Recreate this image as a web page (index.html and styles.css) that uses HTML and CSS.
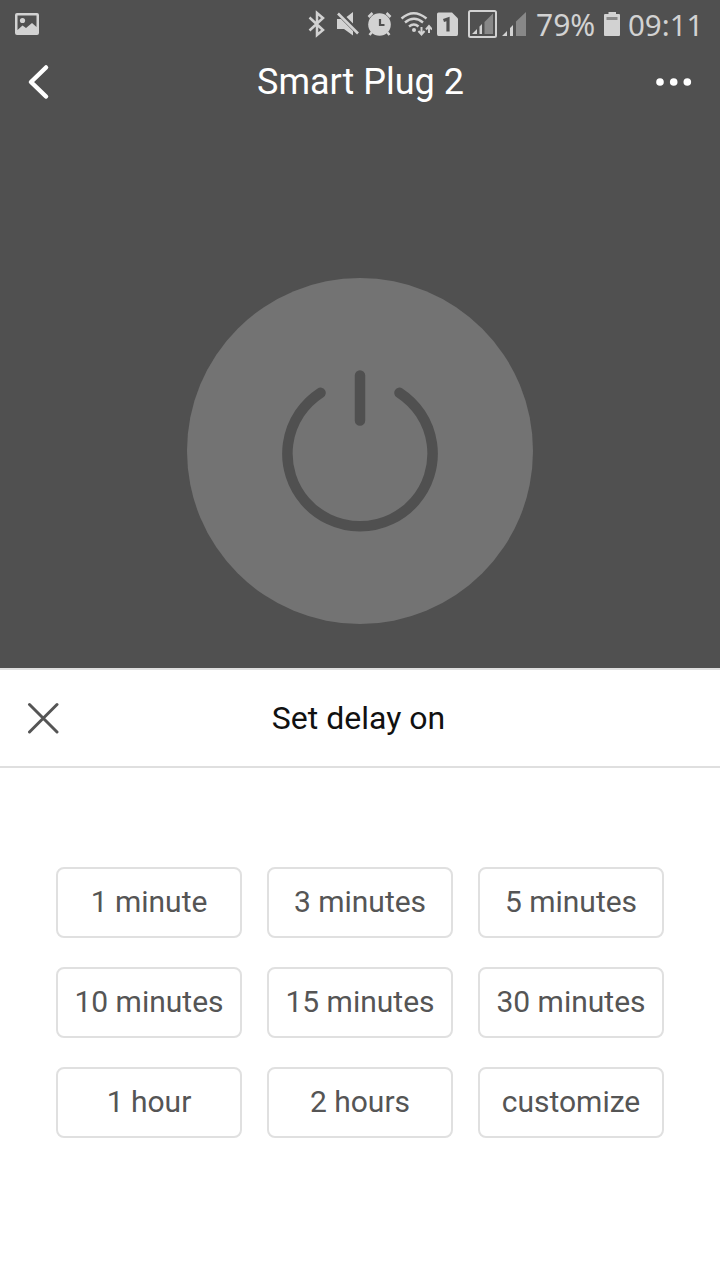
FILE: index.html
```html
<!DOCTYPE html>
<html lang="en">
<head>
<meta charset="utf-8">
<title>Smart Plug 2</title>
<link rel="stylesheet" href="styles.css">
</head>
<body>
<main class="screen">
  <section class="device">
    <div class="status">
      <svg class="picture" width="24" height="22" viewBox="15 13 24 22"><path fill-rule="evenodd" d="M17 13H37Q39 13 39 15V33Q39 35 37 35H17Q15 35 15 33V15Q15 13 17 13ZM17.500 15.500V30L22.500 25.500L26 28L32 23L36.500 27V15.500Z"/><circle cx="22.500" cy="20.500" r="2.600"/></svg>
      <div class="indicators">
        <svg class="bluetooth" width="17" height="50" viewBox="308 0 17 50"><path class="line" d="M309.500 17.500L323 30L317 35V13L323 18L309.500 30.500" stroke-width="2.500"/></svg>
        <svg class="mute" width="24" height="50" viewBox="336 0 24 50"><path d="M337 19H341L353 31V35.500L344 29H337ZM346.500 17L353 12V23.500Z"/><path class="line" d="M338 13.500L358 33.500" stroke-width="2.600"/></svg>
        <svg class="alarm" width="26" height="50" viewBox="367 0 26 50"><circle cx="379.500" cy="24.500" r="11.300"/><path class="line" d="M368.500 17L372.500 13M390.500 17L386.500 13M372 32L369.500 35M387 32L389.500 35" stroke-width="2.500"/><path class="cut" d="M380 19V25H384.500" stroke-width="2.200"/></svg>
        <svg class="wifi" width="32" height="50" viewBox="400 0 32 50"><path class="line" d="M401.500 18.500Q413.500 8 426.500 18.500M405 22.500Q414 15 423 22.500M409 26.500Q414 22.500 418.500 26.500" stroke-width="2.400"/><circle cx="414" cy="30" r="2"/><path class="line" d="M421.500 27V34M418.500 31L421.500 34.500L424.500 31M429 33V26.500M426 29.500L429 26L432 29.500" stroke-width="2"/></svg>
        <svg class="sim" width="21" height="50" viewBox="437 0 21 50"><path d="M438.500 12.500H452L458 18.500V34Q458 36 456.500 36H438.500Q437 36 437 34V14Q437 12.500 438.500 12.500Z"/><path class="cut" d="M443.500 20.500L448 19V31.500" stroke-width="3.200"/></svg>
        <svg class="signal-main" width="29" height="50" viewBox="468 0 29 50"><rect class="line" x="469" y="11" width="27" height="26" rx="1.500" stroke-width="2"/><path d="M472 34L477 29V34ZM479.500 26.500L482 24V34H479.500Z"/><path class="faint" d="M484.500 22L493 13.500V34H484.500Z"/></svg>
        <svg class="signal" width="24" height="50" viewBox="502 0 24 50"><path d="M502 36L507 31V36ZM510 28L513 25V36H510Z"/><path class="faint" d="M516 21.500L526 12V36H516Z"/></svg>
        <span class="percent">79%</span>
        <svg class="battery" width="17" height="50" viewBox="604 0 17 50"><path d="M608.500 14V12H616V14H619Q620 14 620 15V35Q620 36 619 36H605Q604 36 604 35V15Q604 14 605 14Z"/><path class="faint" d="M606.500 17H617.500V20H606.500Z"/></svg>
        <span class="time">09:11</span>
      </div>
    </div>
    <header class="navbar">
      <svg width="24" height="40" viewBox="27 62 24 40"><path class="chevron" d="M46 67.500L31 82L46 96.500"/></svg>
      <h1 class="title">Smart Plug 2</h1>
      <svg class="more" width="36" height="10" viewBox="656 77 36 10"><circle cx="660" cy="82" r="3.800"/><circle cx="673.700" cy="82" r="3.800"/><circle cx="687.300" cy="82" r="3.800"/></svg>
    </header>
    <svg class="power" width="346" height="346" viewBox="187 278 346 346"><circle cx="360" cy="451" r="173"/><path d="M360 375.500V420.500M320.500 392.800A72.600 72.600 0 1 0 399.500 392.800"/></svg>
  </section>
  <section class="sheet">
    <header class="sheet-head">
      <svg class="close" width="32" height="32" viewBox="27 702 32 32"><path d="M29.500 704.500L57 732M57 704.500L29.500 732"/></svg>
      <h2 class="sheet-title">Set delay on</h2>
    </header>
    <div class="options">
      <button class="option">1 minute</button>
      <button class="option">3 minutes</button>
      <button class="option">5 minutes</button>
      <button class="option">10 minutes</button>
      <button class="option">15 minutes</button>
      <button class="option">30 minutes</button>
      <button class="option">1 hour</button>
      <button class="option">2 hours</button>
      <button class="option">customize</button>
    </div>
  </section>
</main>
</body>
</html>
```
FILE: styles.css
```css
* { box-sizing: border-box; }
body { margin: 0; font-family: Roboto, sans-serif; }
svg { display: block; flex: none; }
h1, h2 { margin: 0; font-weight: 400; }
.screen { width: 720px; height: 1280px; background: #fff; overflow: hidden; }
.device { height: 668px; background: #505050; }

.status { display: flex; justify-content: space-between; align-items: center; height: 50px; padding: 0 17px 0 15px; color: #d2d2d2; fill: #d2d2d2; }
.picture { margin-bottom: 2px; }
.indicators { display: flex; height: 50px; font: 30px/50px "Noto Sans", sans-serif; white-space: nowrap; }
.mute { margin-left: 11px; }
.alarm, .wifi { margin-left: 7px; }
.sim, .signal { margin-left: 5px; }
.signal-main { margin-left: 10px; }
.line { fill: none; stroke: #d2d2d2; }
.cut { fill: none; stroke: #505050; }
.faint { fill: #888; }
.percent { width: 59px; margin-left: 10px; }
.battery { margin-left: 9px; }
.time { width: 75px; margin-left: 7px; font-size: 29.5px; line-height: 49px; }

.navbar { display: grid; grid-template-columns: 37px 1fr 36px; align-items: center; height: 64px; padding: 0 28px; }
.navbar svg:first-child { margin-left: -1px; }
.title { font-size: 36px; line-height: 60px; text-align: center; color: #fff; }
.chevron { fill: none; stroke: #fff; stroke-width: 4.500; stroke-linecap: round; stroke-linejoin: round; }
.more { fill: #fff; }

.power { margin: 164px auto 0; fill: #737373; }
.power path { fill: none; stroke: #505050; stroke-width: 10.500; stroke-linecap: round; }

.sheet-head { display: grid; grid-template-columns: 32px 1fr 34px; align-items: center; height: 100px; padding: 0 28px 0 27px; border-top: 2px solid #dfdfdf; border-bottom: 2px solid #dfdfdf; }
.close { fill: none; stroke: #555; stroke-width: 3; stroke-linecap: round; }
.sheet-title { font-size: 32px; line-height: 48px; text-align: center; color: #111; }
.options { display: grid; grid-template-columns: repeat(3, 186px); grid-auto-rows: 71px; gap: 29px 25px; padding: 99px 56px 0; }
.option { padding: 0 0 2px; border: 2px solid #e0e0e0; border-radius: 8px; background: #fff; color: #555; font: 30px/40px Roboto, sans-serif; white-space: nowrap; }
```
